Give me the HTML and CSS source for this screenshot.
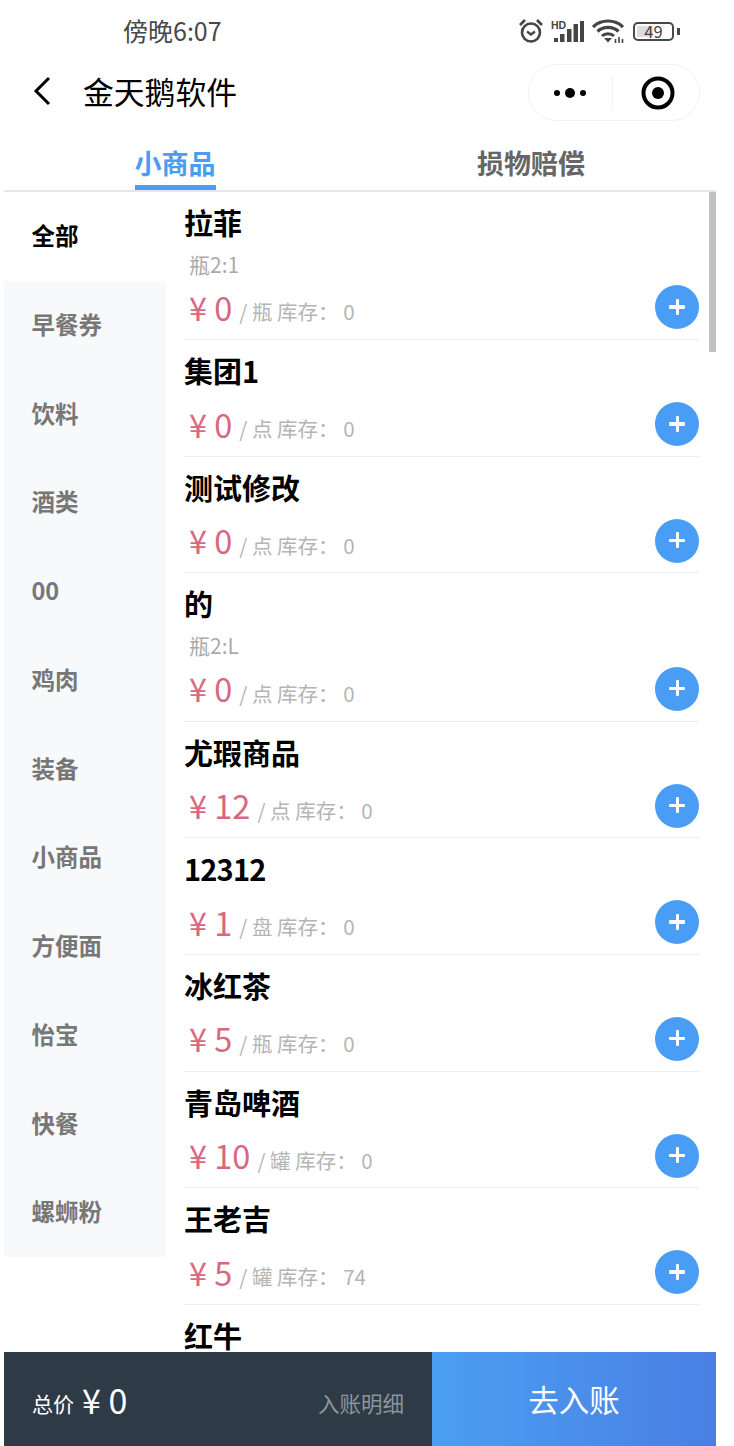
FILE: index.html
```html
<!DOCTYPE html>
<html lang="zh-CN">
<head>
	<meta charset="UTF-8">
	<meta name="viewport" content="width=device-width, initial-scale=1.0">
	<title>金天鹅软件</title>
	<link rel="stylesheet" href="styles.css">
</head>
<body>
	<div class="status">
		<span class="time">傍晚6:07</span>
		<div class="status-icons">
			<svg class="ic-alarm" width="26" height="26" viewBox="0 0 26 26">
				<circle cx="13" cy="14.5" r="9" fill="none" stroke="#444" stroke-width="2.6"/>
				<path d="M9 13.500l4 3 4-3" fill="none" stroke="#444" stroke-width="2.200"/>
				<path d="M2 7l5-5M24 7l-5-5" fill="none" stroke="#444" stroke-width="2.600"/>
			</svg>
			<svg class="ic-signal" width="33" height="23" viewBox="0 0 33 23">
				<text x="0" y="8.500" class="hd">HD</text>
				<rect x="3" y="18" width="4" height="4" fill="#444"/>
				<rect x="9" y="14" width="4.500" height="8" fill="#444"/>
				<rect x="16" y="9" width="4.500" height="13" fill="#444"/>
				<rect x="22.500" y="4" width="4.500" height="18" fill="#444"/>
				<rect x="29" y="1" width="4" height="21" fill="#444"/>
			</svg>
			<svg class="ic-wifi" width="32" height="24" viewBox="0 0 32 24">
				<path d="M1 8c8-8 22-8 30 0M5.500 12.500c5.500-5.500 15.500-5.500 21 0" fill="none" stroke="#444" stroke-width="3.200"/>
				<path d="M10 17c3-3 9-3 12 0" fill="none" stroke="#444" stroke-width="3"/>
				<path d="M16 23.500l-4-4.500h8z" fill="#444"/>
				<path d="M23.500 24v-4M27 24v-6M30.500 24v-4" stroke="#444" stroke-width="1.600"/>
			</svg>
			<div class="battery"><span class="battery-fill"></span><span class="battery-num">49</span></div>
			<span class="battery-nub"></span>
		</div>
	</div>

	<div class="nav">
		<svg class="back" width="18" height="30" viewBox="0 0 18 30">
			<path d="M16 2L3 15l13 13" fill="none" stroke="#000" stroke-width="3"/>
		</svg>
		<span class="title">金天鹅软件</span>
		<div class="capsule">
			<div class="capsule-part">
				<svg class="capsule-icon" width="34" height="12" viewBox="0 0 34 12">
					<circle cx="4" cy="6" r="3" fill="#000"/>
					<circle cx="17" cy="6" r="5" fill="#000"/>
					<circle cx="30" cy="6" r="3" fill="#000"/>
				</svg>
			</div>
			<div class="capsule-line"></div>
			<div class="capsule-part">
				<svg class="capsule-icon" width="34" height="34" viewBox="0 0 34 34">
					<circle cx="17" cy="17" r="14.500" fill="none" stroke="#000" stroke-width="4"/>
					<circle cx="17" cy="17" r="6" fill="#000"/>
				</svg>
			</div>
		</div>
	</div>

	<div class="tabs">
		<div class="tab"><span class="tab-on">小商品</span></div>
		<div class="tab"><span>损物赔偿</span></div>
	</div>

	<div class="main">
		<ul class="side">
			<li class="current">全部</li>
			<li>早餐券</li>
			<li>饮料</li>
			<li>酒类</li>
			<li>00</li>
			<li>鸡肉</li>
			<li>装备</li>
			<li>小商品</li>
			<li>方便面</li>
			<li>怡宝</li>
			<li>快餐</li>
			<li>螺蛳粉</li>
		</ul>
		<div class="list">
			<div class="item">
				<div class="name">拉菲</div>
				<div class="sub">瓶2:1</div>
				<div class="line"><div class="price">¥ 0</div><div class="unit">/ 瓶 库存： 0</div><div class="add"></div></div>
			</div>
			<div class="item">
				<div class="name">集团1</div>
				<div class="line"><div class="price">¥ 0</div><div class="unit">/ 点 库存： 0</div><div class="add"></div></div>
			</div>
			<div class="item">
				<div class="name">测试修改</div>
				<div class="line"><div class="price">¥ 0</div><div class="unit">/ 点 库存： 0</div><div class="add"></div></div>
			</div>
			<div class="item">
				<div class="name">的</div>
				<div class="sub">瓶2:L</div>
				<div class="line"><div class="price">¥ 0</div><div class="unit">/ 点 库存： 0</div><div class="add"></div></div>
			</div>
			<div class="item">
				<div class="name">尤瑕商品</div>
				<div class="line"><div class="price">¥ 12</div><div class="unit">/ 点 库存： 0</div><div class="add"></div></div>
			</div>
			<div class="item">
				<div class="name name-num">12312</div>
				<div class="line"><div class="price">¥ 1</div><div class="unit">/ 盘 库存： 0</div><div class="add"></div></div>
			</div>
			<div class="item">
				<div class="name">冰红茶</div>
				<div class="line"><div class="price">¥ 5</div><div class="unit">/ 瓶 库存： 0</div><div class="add"></div></div>
			</div>
			<div class="item">
				<div class="name">青岛啤酒</div>
				<div class="line"><div class="price">¥ 10</div><div class="unit">/ 罐 库存： 0</div><div class="add"></div></div>
			</div>
			<div class="item">
				<div class="name">王老吉</div>
				<div class="line"><div class="price">¥ 5</div><div class="unit">/ 罐 库存： 74</div><div class="add"></div></div>
			</div>
			<div class="item">
				<div class="name">红牛</div>
			</div>
		</div>
		<div class="scroll"></div>
	</div>

	<div class="bottom">
		<div class="total">
			<span class="total-label">总价</span>
			<span class="total-num">¥ 0</span>
			<span class="detail">入账明细</span>
		</div>
		<div class="submit">去入账</div>
	</div>
</body>
</html>
```

FILE: styles.css
```css
* {
    padding: 0;
    margin: 0;
    list-style: none;
    box-sizing: border-box;
}

html,
body {
    width: 734px;
    height: 1446px;
    overflow: hidden;
    background: #fff;
}

body {
    display: flex;
    flex-direction: column;
    font-family: "Noto Sans CJK SC", "Noto Sans", sans-serif;
}

/* status bar */
.status {
    height: 60px;
    flex: none;
    display: flex;
    align-items: center;
    padding: 0 54px 0 123px;
}

.time {
    font-size: 25px;
    color: #484848;
}

.status-icons {
    margin-left: auto;
    margin-top: 2px;
    display: flex;
    align-items: center;
}

.ic-alarm {
    margin-right: 7px;
}

.ic-signal {
    margin-right: 8px;
}

.ic-wifi {
    margin-right: 9px;
}

.hd {
    font-family: "Liberation Sans", sans-serif;
    font-size: 10.500px;
    font-weight: bold;
    fill: #444;
}

.battery {
    width: 41px;
    height: 19px;
    border: 2px solid #484848;
    border-radius: 5px;
    position: relative;
    display: flex;
    align-items: center;
    justify-content: center;
}

.battery-fill {
    position: absolute;
    left: 2px;
    top: 2px;
    bottom: 2px;
    width: 16px;
    background: #ddd;
}

.battery-num {
    position: relative;
    font-size: 16.500px;
    line-height: 15px;
    color: #444;
}

.battery-nub {
    width: 3px;
    height: 7px;
    margin-left: 3px;
    background: #484848;
}

/* title bar */
.nav {
    height: 62px;
    flex: none;
    display: flex;
    align-items: center;
    padding-left: 33px;
}

.back {
    flex: none;
}

.title {
    margin-left: 32px;
    margin-top: -2px;
    font-size: 30.800px;
    color: #000;
}

.capsule {
    margin-left: auto;
    margin-right: 34px;
    margin-top: 2px;
    width: 172px;
    height: 57px;
    border: 1px solid #f1f1f1;
    border-radius: 29px;
    display: flex;
    align-items: center;
}

.capsule-part {
    flex: 1;
    display: flex;
    justify-content: center;
    align-items: center;
}

.capsule-icon {
    margin-top: 2px;
}

.capsule-part:last-child {
    padding-left: 4px;
}

.capsule-line {
    width: 1px;
    height: 33px;
    background: #f0f0f0;
}

/* tabs */
.tabs {
    height: 70px;
    flex: none;
    width: 712px;
    margin-left: 4px;
    display: grid;
    grid-template-columns: 342px 1fr;
    border-bottom: 2px solid #e6e6e6;
    text-align: center;
}

.tab span {
    display: inline-block;
    height: 68px;
    padding-top: 21px;
    font-size: 27px;
    line-height: 40px;
    font-weight: 700;
    color: #666;
}

.tab .tab-on {
    color: #4a9df0;
    border-bottom: 5px solid #4a9df0;
}

/* sidebar + goods */
.main {
    flex: 1;
    min-height: 0;
    width: 712px;
    margin-left: 4px;
    display: flex;
    position: relative;
    overflow: hidden;
}

.side {
    width: 162px;
    flex: none;
    align-self: flex-start;
    background: #f8f9fb;
}

.side li {
    height: 88.750px;
    line-height: 86px;
    padding-left: 27.500px;
    font-size: 23.500px;
    font-weight: 700;
    color: #777;
}

.side li.current {
    background: #fff;
    color: #000;
}

.list {
    flex: 1;
    margin-left: 18px;
    margin-right: 17px;
}

.item {
    padding-top: 10px;
    border-bottom: 1px solid #eee;
    padding-bottom: 9.700px;
}

.name {
    height: 40px;
    line-height: 40px;
    font-size: 29px;
    font-weight: 700;
    color: #000;
}

.name-num {
    letter-spacing: -0.800px;
}

.sub {
    margin-top: 12px;
    height: 19.400px;
    line-height: 21.400px;
    padding-left: 5px;
    font-size: 21px;
    color: #aaa;
}

.line {
    margin-top: 12px;
    height: 44px;
    display: flex;
    align-items: center;
    padding-left: 5px;
}

.price {
    margin-top: -2px;
    font-size: 32.500px;
    color: #d9687f;
}

.unit {
    margin-left: 7px;
    margin-top: 8px;
    font-size: 20.500px;
    color: #b5b5b5;
}

.add {
    margin-left: auto;
    width: 44px;
    height: 44px;
    border-radius: 50%;
    background: #4a9df5;
    position: relative;
}

.add:before,
.add:after {
    content: "";
    position: absolute;
    background: #fff;
    border-radius: 1px;
}

.add:before {
    left: 14px;
    top: 20px;
    width: 16px;
    height: 3.500px;
}

.add:after {
    left: 20.500px;
    top: 13.500px;
    width: 3.500px;
    height: 16px;
}

.scroll {
    position: absolute;
    right: 0;
    top: 0;
    width: 7px;
    height: 160px;
    background: #c0c0c0;
}

/* bottom bar */
.bottom {
    height: 94px;
    flex: none;
    width: 712px;
    margin-left: 4px;
    display: flex;
}

.total {
    width: 428px;
    background: #2e3a46;
    display: flex;
    align-items: center;
    padding: 0 28px;
    color: #fff;
}

.total-label {
    font-size: 21px;
    margin-top: 8px;
}

.total-num {
    margin-left: 8px;
    font-size: 34px;
}

.detail {
    margin-left: auto;
    font-size: 21.500px;
    margin-top: 6px;
    color: #8d949b;
}

.submit {
    flex: 1;
    background: linear-gradient(90deg, #4a9ff2, #4a7fe3);
    color: #fff;
    font-size: 30.500px;
    display: flex;
    align-items: center;
    justify-content: center;
}
```
